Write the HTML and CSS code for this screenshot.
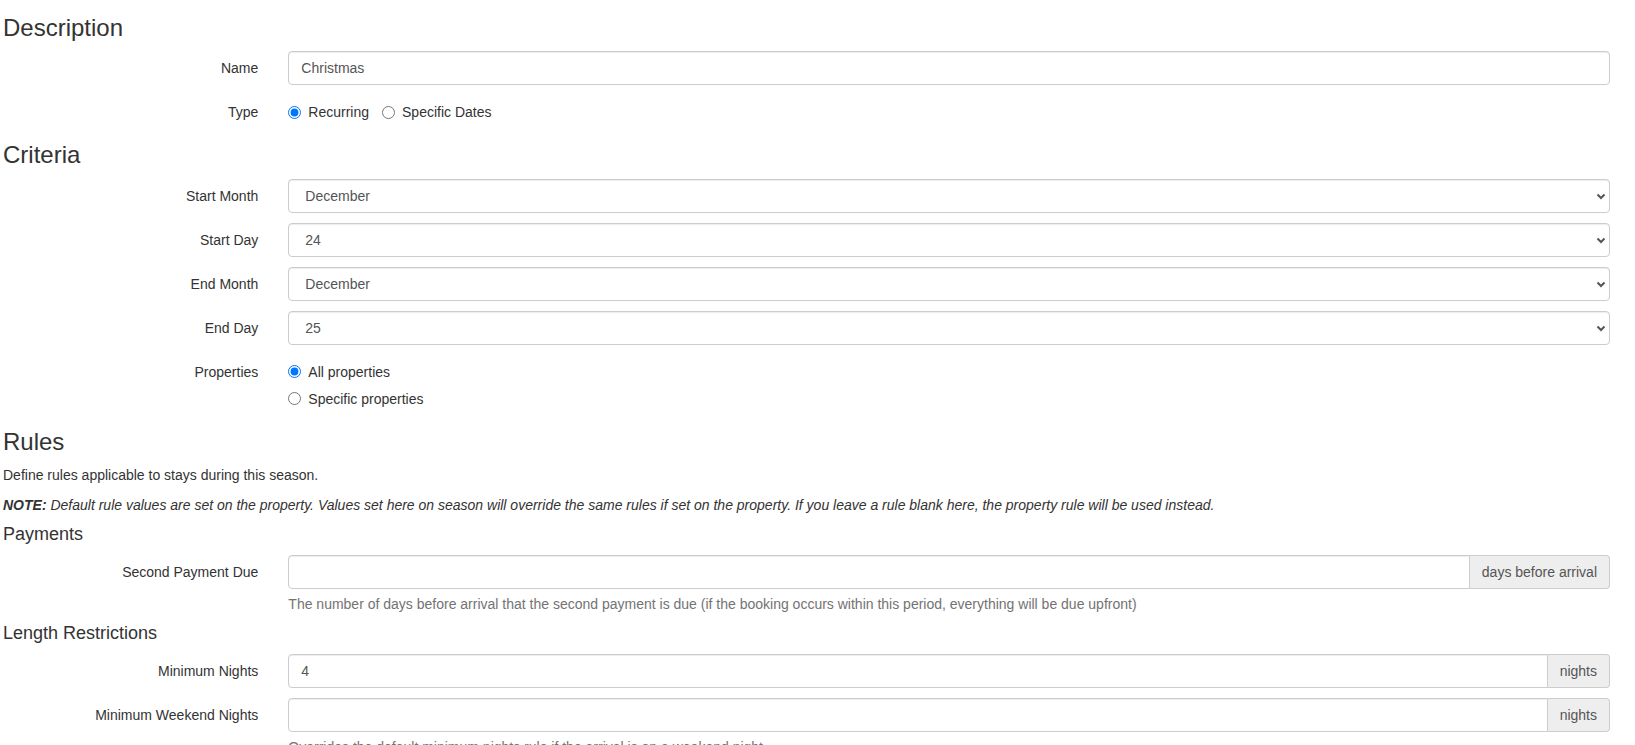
FILE: index.html
```html
<!DOCTYPE html>
<html lang="en">
<head>
    <meta charset="UTF-8">
    <meta name="viewport" content="width=device-width, initial-scale=1.0">
    <title>Season - Christmas</title>
    <link rel="stylesheet" href="styles.css">
</head>
<body>
    <div class="page">
        <form class="season-form">
            <h3 class="section-title first">Description</h3>

            <div class="form-group">
                <label class="control-label" for="name">Name</label>
                <div class="control">
                    <input type="text" class="form-control" id="name" value="Christmas">
                </div>
            </div>

            <div class="form-group">
                <label class="control-label">Type</label>
                <div class="control radio-list inline">
                    <label class="radio"><input type="radio" name="type" checked> Recurring</label>
                    <label class="radio"><input type="radio" name="type"> Specific Dates</label>
                </div>
            </div>

            <h3 class="section-title">Criteria</h3>

            <div class="form-group">
                <label class="control-label" for="start_month">Start Month</label>
                <div class="control">
                    <div class="select-wrap">
                        <select class="form-control" id="start_month">
                            <option>December</option>
                        </select>
                        <svg class="chevron" width="10" height="7" viewBox="0 0 10 7"><path d="M1.5 1.5 L5 5 L8.5 1.5" fill="none" stroke="#555" stroke-width="2"/></svg>
                    </div>
                </div>
            </div>

            <div class="form-group">
                <label class="control-label" for="start_day">Start Day</label>
                <div class="control">
                    <div class="select-wrap">
                        <select class="form-control" id="start_day">
                            <option>24</option>
                        </select>
                        <svg class="chevron" width="10" height="7" viewBox="0 0 10 7"><path d="M1.5 1.5 L5 5 L8.5 1.5" fill="none" stroke="#555" stroke-width="2"/></svg>
                    </div>
                </div>
            </div>

            <div class="form-group">
                <label class="control-label" for="end_month">End Month</label>
                <div class="control">
                    <div class="select-wrap">
                        <select class="form-control" id="end_month">
                            <option>December</option>
                        </select>
                        <svg class="chevron" width="10" height="7" viewBox="0 0 10 7"><path d="M1.5 1.5 L5 5 L8.5 1.5" fill="none" stroke="#555" stroke-width="2"/></svg>
                    </div>
                </div>
            </div>

            <div class="form-group">
                <label class="control-label" for="end_day">End Day</label>
                <div class="control">
                    <div class="select-wrap">
                        <select class="form-control" id="end_day">
                            <option>25</option>
                        </select>
                        <svg class="chevron" width="10" height="7" viewBox="0 0 10 7"><path d="M1.5 1.5 L5 5 L8.5 1.5" fill="none" stroke="#555" stroke-width="2"/></svg>
                    </div>
                </div>
            </div>

            <div class="form-group">
                <label class="control-label">Properties</label>
                <div class="control radio-list">
                    <label class="radio"><input type="radio" name="properties" checked> All properties</label>
                    <label class="radio"><input type="radio" name="properties"> Specific properties</label>
                </div>
            </div>

            <h3 class="section-title">Rules</h3>
            <p>Define rules applicable to stays during this season.</p>
            <p class="note"><strong>NOTE:</strong> Default rule values are set on the property. Values set here on season will override the same rules if set on the property. If you leave a rule blank here, the property rule will be used instead.</p>

            <h4 class="sub-title">Payments</h4>

            <div class="form-group">
                <label class="control-label" for="second_payment">Second Payment Due</label>
                <div class="control">
                    <div class="input-group">
                        <input type="text" class="form-control" id="second_payment">
                        <span class="addon">days before arrival</span>
                    </div>
                    <span class="help-block">The number of days before arrival that the second payment is due (if the booking occurs within this period, everything will be due upfront)</span>
                </div>
            </div>

            <h4 class="sub-title">Length Restrictions</h4>

            <div class="form-group">
                <label class="control-label" for="min_nights">Minimum Nights</label>
                <div class="control">
                    <div class="input-group">
                        <input type="text" class="form-control" id="min_nights" value="4">
                        <span class="addon">nights</span>
                    </div>
                </div>
            </div>

            <div class="form-group">
                <label class="control-label" for="min_weekend">Minimum Weekend Nights</label>
                <div class="control">
                    <div class="input-group">
                        <input type="text" class="form-control" id="min_weekend">
                        <span class="addon">nights</span>
                    </div>
                    <span class="help-block">Overrides the default minimum nights rule if the arrival is on a weekend night.</span>
                </div>
            </div>
        </form>
    </div>
</body>
</html>
```

FILE: styles.css
```css
body {
    margin: 0;
    font-family: "Liberation Sans", Arial, sans-serif;
    font-size: 14px;
    line-height: 20px;
    color: #333;
    background-color: #fff;
}

.page {
    padding: 0 10px 0 3px;
}

p {
    margin: 0 0 10px;
}

.section-title {
    font-size: 24px;
    font-weight: 500;
    line-height: 1.1;
    margin: 20px 0 10px;
}

.section-title.first {
    margin-top: 15px;
}

.sub-title {
    font-size: 18px;
    font-weight: 500;
    line-height: 1.1;
    margin: 10px 0 10px;
}

.note {
    font-style: italic;
}

.form-group {
    display: grid;
    grid-template-columns: 16.6667% 1fr;
    margin-bottom: 10px;
}

.control-label {
    text-align: right;
    padding: 7px 15px 0 0;
    font-weight: normal;
}

.control {
    padding: 0 15px;
    min-width: 0;
}

.form-control {
    display: block;
    width: 100%;
    height: 34px;
    padding: 6px 12px;
    font-family: inherit;
    font-size: 14px;
    line-height: 20px;
    color: #555;
    background-color: #fff;
    border: 1px solid #ccc;
    border-radius: 4px;
    box-shadow: inset 0 1px 1px rgba(0, 0, 0, 0.075);
    box-sizing: border-box;
    margin: 0;
}

/* selects */
.select-wrap {
    position: relative;
}

.select-wrap select {
    appearance: none;
    -webkit-appearance: none;
    padding-left: 16px;
}

.chevron {
    position: absolute;
    right: 4px;
    top: 14px;
    pointer-events: none;
}

/* radios */
.radio-list.inline {
    display: flex;
    gap: 13px;
}

.radio {
    display: flex;
    align-items: center;
    padding-top: 7px;
    min-height: 20px;
    font-weight: normal;
    line-height: 20px;
}

.radio input {
    width: 13px;
    height: 13px;
    margin: 0 7px 0 0;
}

/* input groups */
.input-group {
    display: flex;
}

.input-group .form-control {
    flex: 1;
    border-top-right-radius: 0;
    border-bottom-right-radius: 0;
}

.addon {
    padding: 6px 12px;
    font-size: 14px;
    line-height: 20px;
    color: #555;
    background-color: #eee;
    border: 1px solid #ccc;
    border-left: 0;
    border-radius: 0 4px 4px 0;
    white-space: nowrap;
}

.help-block {
    display: block;
    margin-top: 5px;
    color: #737373;
}
```
